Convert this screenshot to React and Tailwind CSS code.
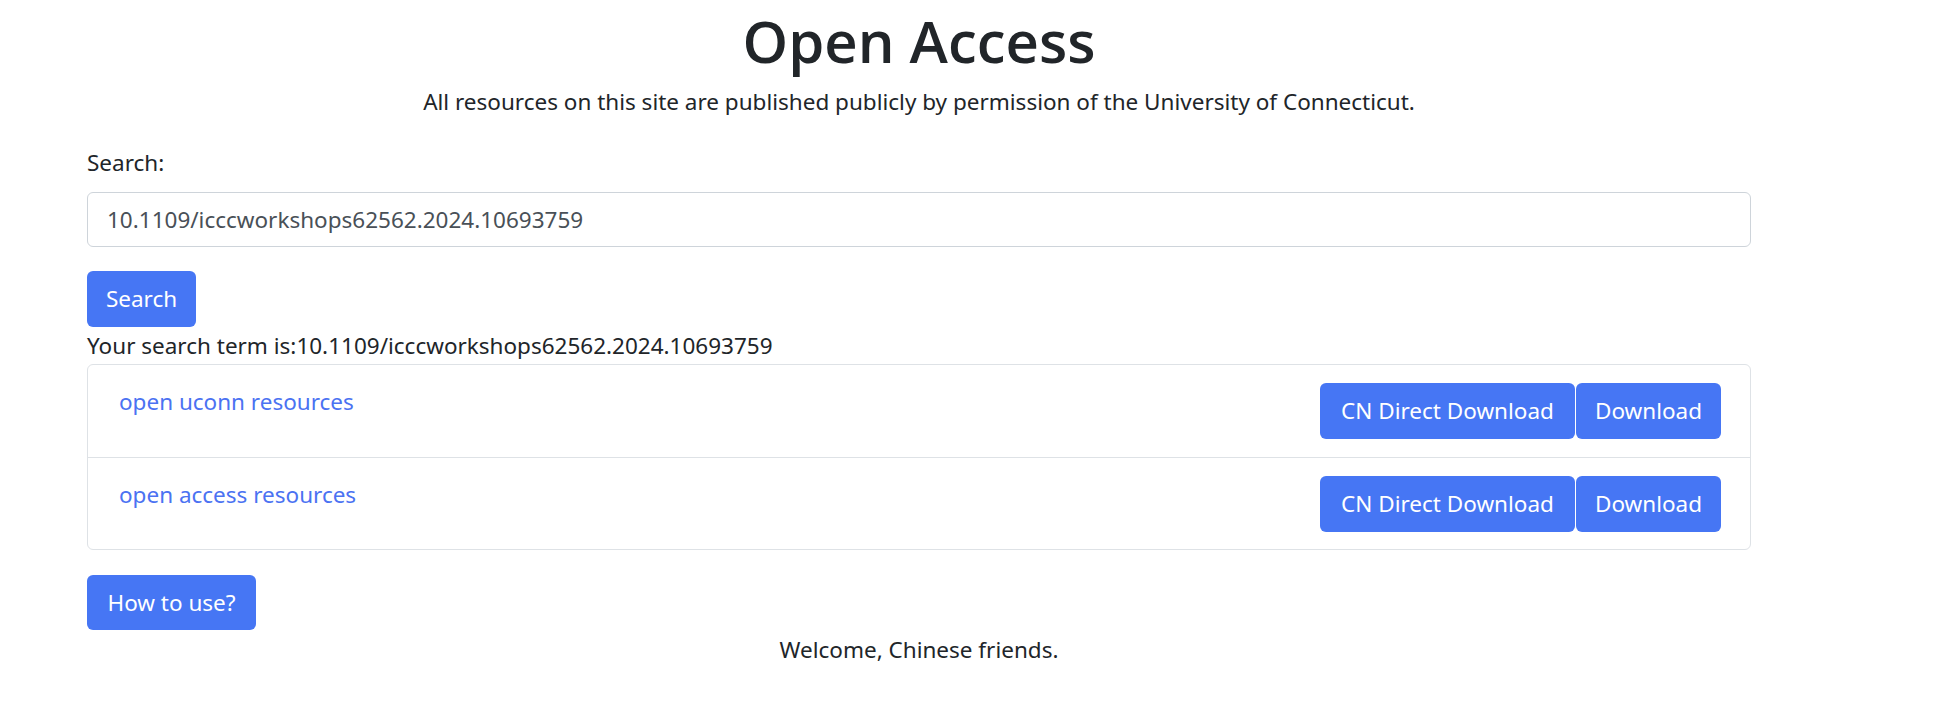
import React from 'react';

const term = '10.1109/icccworkshops62562.2024.10693759';

const resources = [
    { id: 1, name: 'open uconn resources' },
    { id: 2, name: 'open access resources' },
];

const App = () => {
    return (
        <div className="min-h-screen bg-white text-[#212529] font-['Noto_Sans','Open_Sans',sans-serif] text-[22.5px]">
            <div className="ml-[87px] w-[1664px]">
                <h1 className="pt-[5px] text-center font-['Open_Sans','Noto_Sans',sans-serif] text-[58px] font-semibold leading-[72px]">
                    Open Access
                </h1>
                <p className="mt-[7px] text-center leading-[36px]">
                    All resources on this site are published publicly by permission of the University of Connecticut.
                </p>

                <label htmlFor="search" className="mt-[25px] block leading-[36px]">Search:</label>
                <input
                    id="search"
                    type="text"
                    readOnly
                    value={term}
                    className="mt-[11px] block h-[55px] w-full rounded-[6px] border border-[#ced4da] px-[19px] text-[22.5px] text-[#495057] outline-none"
                />

                <button className="mt-[24px] block h-[56px] w-[109px] rounded-[6px] bg-[#4676f4] text-white">
                    Search
                </button>
                <p className="leading-[37px]">Your search term is:{term}</p>

                <ul className="rounded-[6px] border border-[#dee2e6]">
                    {resources.map((item, i) => (
                        <li
                            key={item.id}
                            className={`flex h-[92px] items-start justify-between pl-[31px] pr-[29px] ${i > 0 ? 'border-t border-[#dee2e6]' : ''}`}
                        >
                            <a href="#" className="mt-[19px] leading-[36px] text-[#4b72f2]">
                                {item.name}
                            </a>
                            <div className="mt-[18px] flex gap-[1px]">
                                <button className="h-[56px] w-[255px] rounded-[6px] bg-[#4676f4] text-white">
                                    CN Direct Download
                                </button>
                                <button className="h-[56px] w-[145px] rounded-[6px] bg-[#4676f4] text-white">
                                    Download
                                </button>
                            </div>
                        </li>
                    ))}
                </ul>

                <button className="mt-[25px] block h-[55px] w-[169px] rounded-[6px] bg-[#4676f4] text-white">
                    How to use?
                </button>
                <p className="mt-[2px] text-center leading-[36px]">Welcome, Chinese friends.</p>
            </div>
        </div>
    );
};

export default App;
